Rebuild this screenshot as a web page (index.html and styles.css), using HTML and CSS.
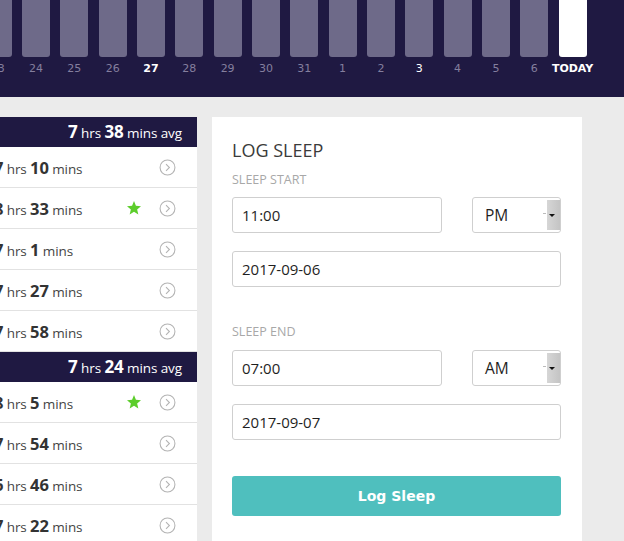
FILE: index.html
```html
<!DOCTYPE html>
<html lang="en">
<head>
<meta charset="utf-8">
<title>Sleep</title>
<link rel="stylesheet" href="styles.css">
</head>
<body>
<header class="chart">
  <div class="cols">
    <div class="col"><div class="bar"></div><span class="day">23</span></div>
    <div class="col"><div class="bar"></div><span class="day">24</span></div>
    <div class="col"><div class="bar"></div><span class="day">25</span></div>
    <div class="col"><div class="bar"></div><span class="day">26</span></div>
    <div class="col"><div class="bar"></div><span class="day strong">27</span></div>
    <div class="col"><div class="bar"></div><span class="day">28</span></div>
    <div class="col"><div class="bar"></div><span class="day">29</span></div>
    <div class="col"><div class="bar"></div><span class="day">30</span></div>
    <div class="col"><div class="bar"></div><span class="day">31</span></div>
    <div class="col"><div class="bar"></div><span class="day">1</span></div>
    <div class="col"><div class="bar"></div><span class="day">2</span></div>
    <div class="col"><div class="bar"></div><span class="day light">3</span></div>
    <div class="col"><div class="bar"></div><span class="day">4</span></div>
    <div class="col"><div class="bar"></div><span class="day">5</span></div>
    <div class="col"><div class="bar"></div><span class="day">6</span></div>
    <div class="col"><div class="bar today"></div><span class="day strong">TODAY</span></div>
  </div>
</header>

<main class="content">
  <section class="list">
    <div class="week-head"><b>7</b> hrs <b>38</b> mins avg</div>
    <div class="row"><span class="dur"><b>7</b> hrs <b>10</b> mins</span><span class="go"><svg viewBox="0 0 16 16"><circle cx="8" cy="8" r="7"/><path d="M6.6 4.8 L9.8 8 L6.6 11.2"/></svg></span></div>
    <div class="row"><span class="dur"><b>8</b> hrs <b>33</b> mins</span><span class="star"><svg viewBox="0 0 24 24"><path d="M12 1.5 L14.9 8.6 L22.5 9.2 L16.7 14.1 L18.5 21.6 L12 17.6 L5.5 21.6 L7.3 14.1 L1.5 9.2 L9.1 8.6 Z"/></svg></span><span class="go"><svg viewBox="0 0 16 16"><circle cx="8" cy="8" r="7"/><path d="M6.6 4.8 L9.8 8 L6.6 11.2"/></svg></span></div>
    <div class="row"><span class="dur"><b>7</b> hrs <b>1</b> mins</span><span class="go"><svg viewBox="0 0 16 16"><circle cx="8" cy="8" r="7"/><path d="M6.6 4.8 L9.8 8 L6.6 11.2"/></svg></span></div>
    <div class="row"><span class="dur"><b>7</b> hrs <b>27</b> mins</span><span class="go"><svg viewBox="0 0 16 16"><circle cx="8" cy="8" r="7"/><path d="M6.6 4.8 L9.8 8 L6.6 11.2"/></svg></span></div>
    <div class="row"><span class="dur"><b>7</b> hrs <b>58</b> mins</span><span class="go"><svg viewBox="0 0 16 16"><circle cx="8" cy="8" r="7"/><path d="M6.6 4.8 L9.8 8 L6.6 11.2"/></svg></span></div>
    <div class="week-head"><b>7</b> hrs <b>24</b> mins avg</div>
    <div class="row"><span class="dur"><b>8</b> hrs <b>5</b> mins</span><span class="star"><svg viewBox="0 0 24 24"><path d="M12 1.5 L14.9 8.6 L22.5 9.2 L16.7 14.1 L18.5 21.6 L12 17.6 L5.5 21.6 L7.3 14.1 L1.5 9.2 L9.1 8.6 Z"/></svg></span><span class="go"><svg viewBox="0 0 16 16"><circle cx="8" cy="8" r="7"/><path d="M6.6 4.8 L9.8 8 L6.6 11.2"/></svg></span></div>
    <div class="row"><span class="dur"><b>7</b> hrs <b>54</b> mins</span><span class="go"><svg viewBox="0 0 16 16"><circle cx="8" cy="8" r="7"/><path d="M6.6 4.8 L9.8 8 L6.6 11.2"/></svg></span></div>
    <div class="row"><span class="dur"><b>6</b> hrs <b>46</b> mins</span><span class="go"><svg viewBox="0 0 16 16"><circle cx="8" cy="8" r="7"/><path d="M6.6 4.8 L9.8 8 L6.6 11.2"/></svg></span></div>
    <div class="row"><span class="dur"><b>7</b> hrs <b>22</b> mins</span><span class="go"><svg viewBox="0 0 16 16"><circle cx="8" cy="8" r="7"/><path d="M6.6 4.8 L9.8 8 L6.6 11.2"/></svg></span></div>
  </section>

  <section class="card">
    <h2 class="title">LOG SLEEP</h2>
    <div class="label">SLEEP START</div>
    <div class="pair">
      <div class="field time">11:00</div>
      <div class="select"><span>PM</span><span class="tick"></span><span class="arrow"></span></div>
    </div>
    <div class="field date">2017-09-06</div>

    <div class="label end">SLEEP END</div>
    <div class="pair">
      <div class="field time">07:00</div>
      <div class="select"><span>AM</span><span class="tick"></span><span class="arrow"></span></div>
    </div>
    <div class="field date">2017-09-07</div>

    <div class="button">Log Sleep</div>
  </section>
</main>
</body>
</html>
```

FILE: styles.css
```css
* { box-sizing: border-box; }

body {
  margin: 0;
  background: #ebebeb;
  font-family: "Open Sans", "Liberation Sans", sans-serif;
  color: #333;
  overflow: hidden;
}

.chart {
  background: #1f1942;
  height: 97px;
  overflow: hidden;
}

.cols {
  display: flex;
  margin-left: -21.5px;
}

.col {
  width: 38.33px;
  flex: none;
  display: flex;
  flex-direction: column;
  align-items: center;
}

.bar {
  width: 28px;
  height: 57px;
  background: #6e6a89;
  border-radius: 0 0 3px 3px;
}

.bar.today { background: #ffffff; }

.day {
  margin-top: 5px;
  font-family: "DejaVu Sans", sans-serif;
  font-size: 11px;
  line-height: 13px;
  color: #847f9e;
  white-space: nowrap;
}

.day.strong { color: #fff; font-weight: bold; }
.day.light { color: #fff; }

.content {
  display: flex;
  align-items: flex-start;
  gap: 15px;
  padding-top: 20px;
}

.list {
  width: 197px;
  flex: none;
  background: #fff;
  overflow: hidden;
}

.week-head {
  height: 30px;
  background: #1f1942;
  color: #fff;
  text-align: right;
  padding-right: 15px;
  font-size: 13.5px;
  line-height: 30px;
  white-space: nowrap;
  letter-spacing: -0.1px;
}

.week-head b { font-size: 17px; font-weight: 700; }

.row {
  height: 41px;
  border-bottom: 1px solid #e2e2e2;
  display: flex;
  align-items: center;
  padding-right: 21px;
  font-size: 13.5px;
  color: #444;
  white-space: nowrap;
}

.dur {
  margin-left: -6px;
  flex: 1;
  letter-spacing: -0.1px;
}

.dur b { font-size: 16.5px; font-weight: 700; color: #333; }

.star {
  width: 16px;
  height: 16px;
  margin-right: 17px;
  display: flex;
}

.star svg { width: 16px; height: 16px; fill: #5ccd2b; }

.go { width: 17px; height: 17px; display: flex; }

.go svg {
  width: 17px;
  height: 17px;
  fill: none;
  stroke: #b3b3b3;
  stroke-width: 1;
}

.card {
  width: 370px;
  flex: none;
  background: #fff;
  padding: 22px 21px 40px 20px;
  min-height: 440px;
}

.title {
  margin: 0;
  font-size: 18px;
  line-height: 22px;
  font-weight: 400;
  color: #3b3b3b;
}

.label {
  margin-top: 11px;
  margin-bottom: 9px;
  font-size: 12.5px;
  line-height: 16px;
  color: #a8a8a8;
  font-weight: 400;
}

.label.end { margin-top: 37px; margin-bottom: 10px; }

.pair {
  display: flex;
  justify-content: space-between;
}

.field {
  height: 36px;
  border: 1px solid #cfcfcf;
  border-radius: 3px;
  padding-left: 9px;
  font-size: 15px;
  line-height: 34px;
  color: #1f1f1f;
  background: #fff;
}

.field.time { width: 210px; }

.field.date { margin-top: 18px; }

.select {
  width: 89px;
  height: 36px;
  border: 1px solid #cfcfcf;
  border-radius: 3px;
  display: flex;
  align-items: center;
  padding-left: 12px;
  font-size: 15.5px;
  color: #1f1f1f;
  overflow: hidden;
}

.select span:first-child { flex: 1; }

.tick {
  width: 3px;
  height: 3px;
  border-top: 1px solid #bbb;
  margin-right: 1px;
  margin-top: -2px;
}

.arrow {
  width: 13px;
  align-self: stretch;
  margin-top: 2px;
  margin-bottom: 2px;
  background: linear-gradient(to right, #d6d6d6, #c4c4c4);
  display: flex;
  align-items: center;
  justify-content: center;
}

.arrow::after {
  content: "";
  border-left: 3px solid transparent;
  border-right: 3px solid transparent;
  border-top: 3px solid #111;
  margin-left: -3px;
}

.button {
  margin-top: 36px;
  height: 40px;
  border-radius: 3px;
  background: #4fbfbe;
  color: #fff;
  font-family: "DejaVu Sans", sans-serif;
  font-weight: bold;
  font-size: 14px;
  line-height: 40px;
  text-align: center;
}
```
